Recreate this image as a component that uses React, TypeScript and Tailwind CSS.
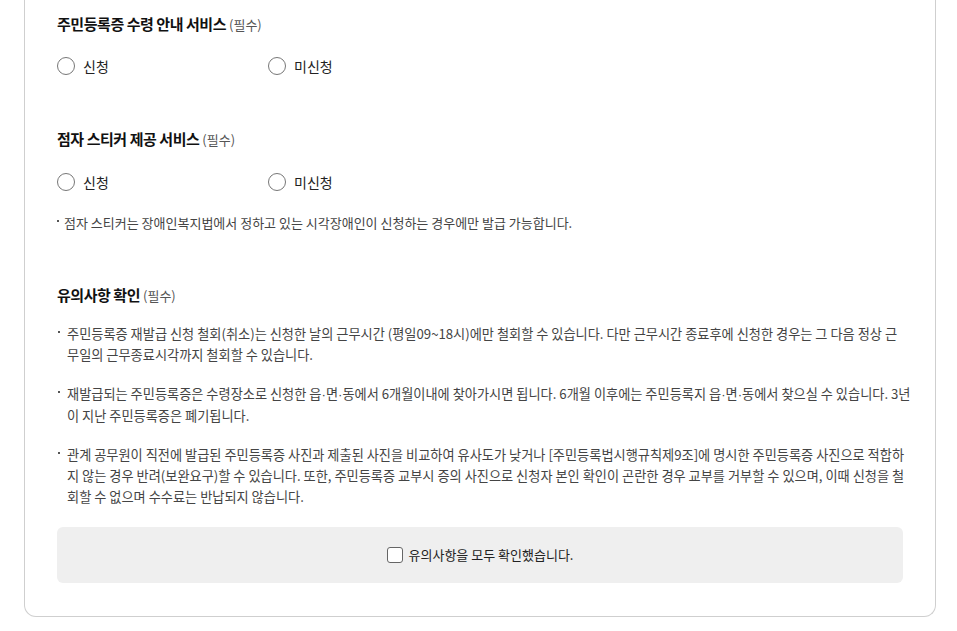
const font = { fontFamily: '"Noto Sans CJK KR", "Noto Sans", sans-serif' }

function Radio({ label }: { label: string }) {
  return (
    <label className="flex w-[211px] items-center gap-[8px] text-[14px] text-[#222]">
      <span className="h-[18px] w-[18px] rounded-full border border-[#777] bg-white" />
      <span>{label}</span>
    </label>
  )
}

function Title({ children }: { children: string }) {
  return (
    <h3 className="text-[15px] font-bold leading-[22px] tracking-[-0.03em] text-[#111]">
      {children} <span className="text-[13px] font-normal tracking-normal text-[#555]">(필수)</span>
    </h3>
  )
}

function Dot() {
  return <span style={{ fontFamily: '"Liberation Sans", sans-serif' }}>·</span>
}

function withDots(s: string) {
  const parts = s.split('·')
  return parts.map((p, i) => (
    <span key={i}>
      {p}
      {i < parts.length - 1 && <Dot />}
    </span>
  ))
}

function Bullet({ lines }: { lines: string[] }) {
  return (
    <div className="flex text-[13.2px] leading-[21px] text-[#444]">
      <span className="flex w-[10px] shrink-0 pl-[1px] pt-[8px]">
        <span className="h-[2px] w-[2px] bg-[#555]" />
      </span>
      <p>
        {lines.map((l, i) => (
          <span key={i} className="block whitespace-nowrap">
            {withDots(l)}
          </span>
        ))}
      </p>
    </div>
  )
}

export default function App() {
  return (
    <div className="min-h-screen bg-white" style={font}>
      <div className="ml-[24px] mr-[21px] rounded-b-[12px] border-x border-b border-[#cfcfcf] px-[32px] pb-[33px] pt-[13px]">
        <Title>주민등록증 수령 안내 서비스</Title>
        <div className="mt-[19px] flex h-[22px]">
          <Radio label="신청" />
          <Radio label="미신청" />
        </div>

        <div className="mt-[51px]">
          <Title>점자 스티커 제공 서비스</Title>
        </div>
        <div className="mt-[20px] flex h-[22px]">
          <Radio label="신청" />
          <Radio label="미신청" />
        </div>
        <p className="mt-[21px] flex items-center text-[13px] leading-[18px] text-[#444]">
          <span className="-mt-[4px] mr-[5px] h-[2px] w-[2px] bg-[#555]" />
          점자 스티커는 장애인복지법에서 정하고 있는 시각장애인이 신청하는 경우에만 발급 가능합니다.
        </p>

        <div className="mt-[52px]">
          <Title>유의사항 확인</Title>
        </div>
        <div className="mt-[16px] flex flex-col gap-[18px]">
          <Bullet
            lines={[
              '주민등록증 재발급 신청 철회(취소)는 신청한 날의 근무시간 (평일09~18시)에만 철회할 수 있습니다. 다만 근무시간 종료후에 신청한 경우는 그 다음 정상 근',
              '무일의 근무종료시각까지 철회할 수 있습니다.',
            ]}
          />
          <Bullet
            lines={[
              '재발급되는 주민등록증은 수령장소로 신청한 읍·면·동에서 6개월이내에 찾아가시면 됩니다. 6개월 이후에는 주민등록지 읍·면·동에서 찾으실 수 있습니다. 3년',
              '이 지난 주민등록증은 폐기됩니다.',
            ]}
          />
          <Bullet
            lines={[
              '관계 공무원이 직전에 발급된 주민등록증 사진과 제출된 사진을 비교하여 유사도가 낮거나 [주민등록법시행규칙제9조]에 명시한 주민등록증 사진으로 적합하',
              '지 않는 경우 반려(보완요구)할 수 있습니다. 또한, 주민등록증 교부시 증의 사진으로 신청자 본인 확인이 곤란한 경우 교부를 거부할 수 있으며, 이때 신청을 철',
              '회할 수 없으며 수수료는 반납되지 않습니다.',
            ]}
          />
        </div>

        <div className="mt-[20px] flex h-[56px] items-center justify-center rounded-[6px] bg-[#efefef]">
          <label className="flex items-center gap-[6px] text-[13px] text-[#222]">
            <span className="h-[16px] w-[16px] rounded-[3px] border border-[#666] bg-white" />
            유의사항을 모두 확인했습니다.
          </label>
        </div>
      </div>
    </div>
  )
}
